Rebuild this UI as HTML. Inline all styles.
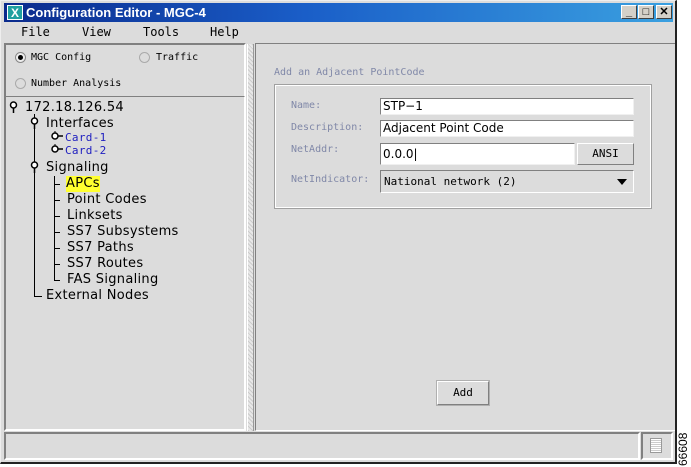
<!DOCTYPE html>
<html><head><style>
*{margin:0;padding:0;box-sizing:border-box}
body{width:691px;height:467px;background:#fff;position:relative;overflow:hidden;font-family:"DejaVu Sans Mono","Liberation Mono",monospace;font-size:10px;color:#000}
.a{position:absolute}
#win{left:0;top:0;width:677px;height:464px;background:#dcdcdc;border-right:2px solid #222;border-bottom:2px solid #222;border-left:1px solid #eee;border-top:1px solid #eee}
#title{left:4px;top:3px;width:669px;height:19px;background:linear-gradient(90deg,#0a2a8c 0%,#1a5ec8 45%,#3aa0e0 100%);color:#fff;font-family:"Liberation Sans",sans-serif;font-weight:bold;font-size:13px;line-height:19px}
.btn{background:#d4d0c8;border:1px solid;border-color:#fff #404040 #404040 #fff;width:16px;height:14px;top:2px;font-size:11px;line-height:12px;text-align:center;color:#000;font-family:"Liberation Sans",sans-serif}
.menu{top:25px;font-size:12px}
.sunk{border:2px solid;border-color:#808080 #fff #fff #808080}
.tree{font-family:"DejaVu Sans",sans-serif;font-size:13px;line-height:16px;letter-spacing:0.3px}
.lbl{color:#8088a8;font-size:10px}
.inp{background:#fff;border:1px solid;border-color:#808080 #f0f0f0 #f0f0f0 #808080;height:17px;font-family:"DejaVu Sans",sans-serif;font-size:12px;line-height:15px;padding-left:2px}
.line{background:#000}
svg{position:absolute}
</style></head><body>
<div id="win" class="a"></div>
<div id="title" class="a"><span class="a" style="left:3px;top:2px;width:16px;height:15px;background:#20a0a0;color:#fff;font-size:12px;line-height:15px;text-align:center;border:1px solid #fff">X</span><span class="a" style="left:22px;top:0">Configuration Editor - MGC-4</span>
<div class="a btn" style="left:617px">_</div><div class="a btn" style="left:634px">□</div><div class="a btn" style="left:652px;font-weight:bold">✕</div></div>
<div class="a menu" style="left:21px">File</div>
<div class="a menu" style="left:82px">View</div>
<div class="a menu" style="left:143px">Tools</div>
<div class="a menu" style="left:210px">Help</div>
<div class="a sunk" style="left:4px;top:43px;width:242px;height:388px"></div>
<div class="a" style="left:15px;top:52px;width:11px;height:11px;border-radius:50%;border:1px solid #888;background:#eee"></div>
<div class="a" style="left:18px;top:55px;width:5px;height:5px;border-radius:50%;background:#000"></div>
<div class="a" style="left:31px;top:52px">MGC Config</div>
<div class="a" style="left:139px;top:52px;width:11px;height:11px;border-radius:50%;border:1px solid #aaa"></div>
<div class="a" style="left:156px;top:52px">Traffic</div>
<div class="a" style="left:15px;top:78px;width:11px;height:11px;border-radius:50%;border:1px solid #aaa"></div>
<div class="a" style="left:31px;top:78px">Number Analysis</div>
<div class="a sunk" style="left:5px;top:96px;width:240px;height:334px;border-width:1px"></div>
<div class="a line" style="left:34px;top:114px;width:1px;height:182px"></div>
<div class="a line" style="left:34px;top:296px;width:8px;height:1px"></div>
<div class="a line" style="left:54px;top:176px;width:1px;height:104px"></div>
<svg style="left:9px;top:101px" width="10" height="12"><circle cx="4.5" cy="4" r="3" fill="#fff" stroke="#000" stroke-width="1.5"/><line x1="4.5" y1="7" x2="4.5" y2="12" stroke="#000" stroke-width="1.5"/></svg>
<svg style="left:30px;top:117px" width="10" height="12"><circle cx="4.5" cy="4" r="3" fill="#fff" stroke="#000" stroke-width="1.5"/><line x1="4.5" y1="7" x2="4.5" y2="12" stroke="#000" stroke-width="1.5"/></svg>
<svg style="left:30px;top:161px" width="10" height="12"><circle cx="4.5" cy="4" r="3" fill="#fff" stroke="#000" stroke-width="1.5"/><line x1="4.5" y1="7" x2="4.5" y2="12" stroke="#000" stroke-width="1.5"/></svg>
<svg style="left:50px;top:131px" width="14" height="12"><circle cx="5" cy="5" r="3" fill="#fff" stroke="#000" stroke-width="1.5"/><line x1="8" y1="5" x2="13" y2="5" stroke="#000" stroke-width="1.5"/><line x1="5" y1="0" x2="5" y2="2" stroke="#000"/></svg>
<svg style="left:50px;top:144px" width="14" height="12"><circle cx="5" cy="5" r="3" fill="#fff" stroke="#000" stroke-width="1.5"/><line x1="8" y1="5" x2="13" y2="5" stroke="#000" stroke-width="1.5"/><line x1="5" y1="0" x2="5" y2="2" stroke="#000"/></svg>
<div class="a tree" style="left:25px;top:100px">172.18.126.54</div>
<div class="a tree" style="left:46px;top:116px">Interfaces</div>
<div class="a tree" style="left:65px;top:131px;font-size:11px;line-height:13px;color:#2020c0;font-family:'DejaVu Sans Mono',monospace">Card-1</div>
<div class="a tree" style="left:65px;top:144px;font-size:11px;line-height:13px;color:#2020c0;font-family:'DejaVu Sans Mono',monospace">Card-2</div>
<div class="a tree" style="left:46px;top:160px">Signaling</div>
<div class="a tree" style="left:66px;top:176px;background:#ffff30">APCs</div>
<div class="a tree" style="left:67px;top:192px">Point Codes</div>
<div class="a tree" style="left:67px;top:208px">Linksets</div>
<div class="a tree" style="left:67px;top:224px">SS7 Subsystems</div>
<div class="a tree" style="left:67px;top:240px">SS7 Paths</div>
<div class="a tree" style="left:67px;top:256px">SS7 Routes</div>
<div class="a tree" style="left:67px;top:272px">FAS Signaling</div>
<div class="a tree" style="left:46px;top:288px">External Nodes</div>
<div class="a line" style="left:54px;top:184px;width:6px;height:1px"></div>
<div class="a line" style="left:54px;top:200px;width:6px;height:1px"></div>
<div class="a line" style="left:54px;top:216px;width:6px;height:1px"></div>
<div class="a line" style="left:54px;top:232px;width:6px;height:1px"></div>
<div class="a line" style="left:54px;top:248px;width:6px;height:1px"></div>
<div class="a line" style="left:54px;top:264px;width:6px;height:1px"></div>
<div class="a line" style="left:54px;top:280px;width:6px;height:1px"></div>
<div class="a" style="left:247px;top:44px;width:7px;height:387px;border-left:1px solid #fff;border-right:1px solid #999;background:repeating-linear-gradient(45deg,#ccc 0 1px,#e8e8e8 1px 3px)"></div>
<div class="a sunk" style="left:255px;top:43px;width:420px;height:388px;border-width:1px 0 1px 1px"></div>
<div class="a lbl" style="left:274px;top:67px">Add an Adjacent PointCode</div>
<div class="a" style="left:275px;top:85px;width:376px;height:123px;border:1px solid #fff;outline:1px solid #a0a0a0"></div>
<div class="a lbl" style="left:291px;top:100px">Name:</div>
<div class="a lbl" style="left:291px;top:122px">Description:</div>
<div class="a lbl" style="left:291px;top:144px">NetAddr:</div>
<div class="a lbl" style="left:291px;top:174px">NetIndicator:</div>
<div class="a inp" style="left:380px;top:98px;width:254px">STP−1</div>
<div class="a inp" style="left:380px;top:120px;width:254px">Adjacent Point Code</div>
<div class="a inp" style="left:380px;top:143px;width:195px;height:22px;line-height:20px">0.0.0|</div>
<div class="a" style="left:577px;top:143px;width:57px;height:22px;border:1px solid;border-color:#fff #808080 #808080 #fff;text-align:center;line-height:20px;font-size:11px">ANSI</div>
<div class="a" style="left:380px;top:170px;width:254px;height:23px;border:1px solid;border-color:#808080 #fff #fff #808080;line-height:21px;padding-left:3px;font-size:11px">National network (2)<span class="a" style="right:6px;top:8px;width:0;height:0;border-left:5px solid transparent;border-right:5px solid transparent;border-top:6px solid #000"></span></div>
<div class="a" style="left:437px;top:381px;width:52px;height:24px;border:1px solid;border-color:#fff #808080 #808080 #fff;outline:1px solid #b0b0b0;text-align:center;line-height:22px;font-size:11px">Add</div>
<div class="a sunk" style="left:4px;top:432px;width:636px;height:28px"></div>
<div class="a sunk" style="left:641px;top:432px;width:32px;height:28px"></div>
<div class="a" style="left:650px;top:438px;width:12px;height:15px;background:repeating-linear-gradient(0deg,#fff 0 1px,#ccc 1px 2px);border:1px solid #999"></div>
<div class="a" style="transform:rotate(-90deg);transform-origin:left top;left:677px;top:466px;font-family:'Liberation Sans',sans-serif;font-size:12px;line-height:13px">66608</div>
</body></html>
